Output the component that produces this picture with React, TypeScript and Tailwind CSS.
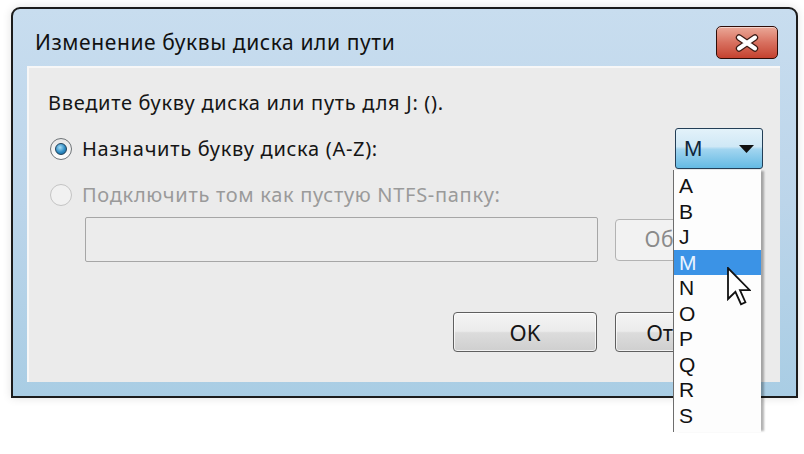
import React from 'react';

const letters = ['A', 'B', 'J', 'M', 'N', 'O', 'P', 'Q', 'R', 'S'];

function CloseGlyph() {
  return (
    <svg width="26" height="18" viewBox="0 0 26 18">
      <path d="M5 3.5 L21 14.5 M21 3.5 L5 14.5" stroke="#3a1a14" strokeWidth="6.4" strokeLinecap="round" />
      <path d="M5 3.5 L21 14.5 M21 3.5 L5 14.5" stroke="#ffffff" strokeWidth="4" strokeLinecap="round" />
    </svg>
  );
}

function Cursor() {
  return (
    <svg width="24" height="39" viewBox="0 0 12 19.5">
      <path
        d="M0.5 0.5 L0.5 16 L4.2 12.4 L7 18.6 L9.2 17.6 L6.5 11.6 L11.4 11.6 Z"
        fill="#ffffff"
        stroke="#111111"
        strokeWidth="0.9"
        strokeLinejoin="miter"
      />
    </svg>
  );
}

export default function App() {
  return (
    <div className="relative w-[804px] h-[454px] overflow-hidden bg-white font-['Noto_Sans','DejaVu_Sans',sans-serif]">
      {/* Window */}
      <div className="ml-[11px] mt-[7px] w-[787px] h-[391px] flex flex-col rounded-t-[9px] border-2 border-[#1c1c1c] bg-gradient-to-b from-[#c8ddef] via-[#bcd5ea] to-[#a9cde4] shadow-[0_0_10px_rgba(0,0,0,0.12)]">
        {/* Title bar */}
        <div className="h-[57px] flex items-start justify-between">
          <div className="ml-[22px] mt-[19px] text-[21px] leading-[28px] text-[#111] tracking-[0.6px]">
            Изменение буквы диска или пути
          </div>
          <div className="mr-[18px] mt-[17px] w-[62px] h-[33px] rounded-[5px] border border-[#2f0d08] bg-gradient-to-b from-[#eaa898] via-[#d8705f] to-[#c4412f] flex items-center justify-center shadow-[inset_0_1px_0_rgba(255,255,255,0.5)]">
            <CloseGlyph />
          </div>
        </div>

        {/* Client area */}
        <div className="ml-[14px] mr-[16px] h-[316px] border-t-2 border-l-2 border-[#f7f7f7] bg-[#ebebeb] flex flex-col">
          <div className="ml-[19px] mt-[22px] text-[20px] leading-[26px] tracking-[0.7px] text-[#151515]">
            Введите букву диска или путь для J: ().
          </div>

          {/* Row 1 */}
          <div className="mt-[12px] flex items-start justify-between">
            <div className="ml-[21px] mt-[8px] flex items-center gap-[10px]">
              <div className="w-[22px] h-[22px] rounded-full border border-[#6f7478] bg-gradient-to-b from-[#e6e6e6] to-[#ffffff] flex items-center justify-center">
                <div className="w-[12px] h-[12px] rounded-full border border-[#20415a] bg-[radial-gradient(circle_at_40%_35%,#a8def8,#2e8cc4_55%,#155d8e)]" />
              </div>
              <span className="text-[20px] leading-[26px] tracking-[0.7px] text-[#151515]">Назначить букву диска (A-Z):</span>
            </div>
            <div className="mr-[17px] w-[88px] h-[41px] rounded-[3px] border border-[#233e56] bg-[linear-gradient(to_bottom,#e3f2fa_0%,#cfe8f6_45%,#a2d5f0_52%,#64bae3_100%)] flex items-center justify-between pl-[8px] pr-[8px]">
              <span className="font-['Liberation_Sans',sans-serif] text-[22px] leading-none text-[#10253a]">M</span>
              <svg width="15" height="8" viewBox="0 0 15 8">
                <path d="M0 0 L15 0 L7.5 8 Z" fill="#111" />
              </svg>
            </div>
          </div>

          {/* Row 2 (disabled) */}
          <div className="ml-[21px] mt-[13px] flex items-center gap-[10px]">
            <div className="w-[22px] h-[22px] rounded-full border border-[#c4c4c4] bg-[#f1f1f1]" />
            <span className="text-[20px] leading-[26px] tracking-[0.7px] text-[#9a9a9a]">Подключить том как пустую NTFS-папку:</span>
          </div>

          {/* Path row */}
          <div className="mt-[9px] ml-[56px] mr-[21px] flex items-center gap-[17px]">
            <div className="flex-1 h-[45px] rounded-[2px] border border-[#a6a6a6] bg-[#ececec]" />
            <div className="w-[144px] h-[42px] rounded-[4px] border border-[#b3b3b3] bg-[#f2f2f2] flex items-center justify-center text-[21px] tracking-[0.5px] text-[#8a8a8a]">
              Обзор...
            </div>
          </div>

          {/* Buttons */}
          <div className="mt-[50px] mr-[21px] flex justify-end gap-[18px]">
            <div className="w-[144px] h-[40px] rounded-[4px] border border-[#5f5f5f] bg-[linear-gradient(to_bottom,#f4f4f4_0%,#ebebeb_48%,#dcdcdc_52%,#cfcfcf_100%)] shadow-[inset_0_0_0_1px_rgba(255,255,255,0.7)] flex items-center justify-center text-[22px] text-[#151515]">
              OK
            </div>
            <div className="w-[144px] h-[40px] rounded-[4px] border border-[#5f5f5f] bg-[linear-gradient(to_bottom,#f4f4f4_0%,#ebebeb_48%,#dcdcdc_52%,#cfcfcf_100%)] shadow-[inset_0_0_0_1px_rgba(255,255,255,0.7)] flex items-center justify-center text-[22px] text-[#151515]">
              Отмена
            </div>
          </div>
        </div>
        <div className="flex-1" />
      </div>

      {/* Open dropdown list */}
      <div className="absolute left-[673px] top-[170px] w-[88px] h-[262px] border-l border-[#6d6d6d] bg-[#fdfdfd] pt-[3px] shadow-[4px_0_2px_-1px_rgba(0,0,0,0.3)] font-['Liberation_Sans',sans-serif]">
        {letters.map((l) => (
          <div
            key={l}
            className={
              l === 'M'
                ? 'h-[25.5px] pl-[5px] text-[21px] leading-[25.5px] bg-[#3b93e6] text-[#e8f3ff]'
                : 'h-[25.5px] pl-[5px] text-[21px] leading-[25.5px] text-[#111]'
            }
          >
            {l}
          </div>
        ))}
      </div>

      {/* Mouse pointer */}
      <div className="absolute left-[727px] top-[267px]">
        <Cursor />
      </div>
    </div>
  );
}
